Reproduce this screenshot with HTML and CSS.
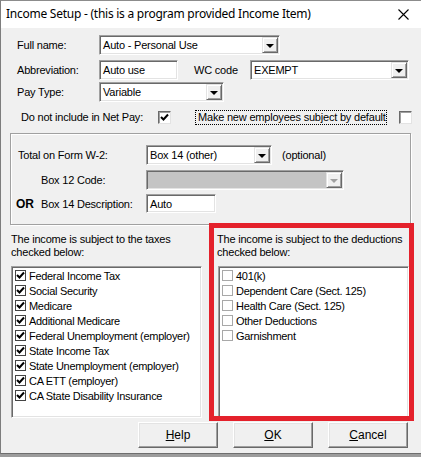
FILE: index.html
```html
<!DOCTYPE html>
<html>
<head>
  <title>Income Setup</title>
  <meta content="width=device-width, initial-scale=1" name="viewport" />
  <link rel="stylesheet" href="styles.css">
</head>
<body>
  <div class="window">
    <div class="titlebar">
      <span class="title">Income Setup - (this is a program provided Income Item)</span>
      <svg class="close" width="11" height="11" viewBox="0 0 11 11"><path d="M0.5 0.5 L10.5 10.5 M10.5 0.5 L0.5 10.5" stroke="#000" stroke-width="1.1" fill="none"/></svg>
    </div>

    <div class="row rowName">
      <span class="lbl lblMain">Full name:</span>
      <div class="combo wName"><span class="val">Auto - Personal Use</span><span class="drop"><i></i></span></div>
    </div>
    <div class="row rowAbbr">
      <span class="lbl lblMain">Abbreviation:</span>
      <div class="edit wAbbr">Auto use</div>
      <span class="lbl lblWc">WC code</span>
      <div class="combo wWc"><span class="val">EXEMPT</span><span class="drop"><i></i></span></div>
    </div>
    <div class="row rowPay">
      <span class="lbl lblMain">Pay Type:</span>
      <div class="combo wPay"><span class="val">Variable</span><span class="drop"><i></i></span></div>
    </div>
    <div class="row rowNet">
      <span class="lbl lblNet">Do not include in Net Pay:</span>
      <span class="check checked"><svg width="9" height="9" viewBox="0 0 9 9"><path d="M1 4 L3.5 6.5 L8 1.5" stroke="#000" stroke-width="2" fill="none"/></svg></span>
      <span class="focusText">Make new employees subject by default</span>
      <span class="check"></span>
    </div>

    <div class="group">
      <div class="row gRow1">
        <span class="lbl lblW2">Total on Form W-2:</span>
        <div class="combo wW2"><span class="val">Box 14 (other)</span><span class="drop"><i></i></span></div>
        <span class="lbl optional">(optional)</span>
      </div>
      <div class="row gRow2">
        <span class="lbl lblIndent">Box 12 Code:</span>
        <div class="combo disabled wBox12"><span class="val"></span><span class="drop"><i></i></span></div>
      </div>
      <div class="row gRow3">
        <span class="lbl lblOr">OR</span>
        <span class="lbl lblDesc">Box 14 Description:</span>
        <div class="edit wDesc">Auto</div>
      </div>
    </div>

    <div class="lists">
      <div class="listCol">
        <p class="caption">The income is subject to the taxes<br>checked below:</p>
        <ul class="listbox">
          <li><span class="box on"><svg width="9" height="9" viewBox="0 0 9 9"><path d="M1 4 L3.5 6.5 L8 1.5" stroke="#000" stroke-width="2" fill="none"/></svg></span>Federal Income Tax</li>
          <li><span class="box on"><svg width="9" height="9" viewBox="0 0 9 9"><path d="M1 4 L3.5 6.5 L8 1.5" stroke="#000" stroke-width="2" fill="none"/></svg></span>Social Security</li>
          <li><span class="box on"><svg width="9" height="9" viewBox="0 0 9 9"><path d="M1 4 L3.5 6.5 L8 1.5" stroke="#000" stroke-width="2" fill="none"/></svg></span>Medicare</li>
          <li><span class="box on"><svg width="9" height="9" viewBox="0 0 9 9"><path d="M1 4 L3.5 6.5 L8 1.5" stroke="#000" stroke-width="2" fill="none"/></svg></span>Additional Medicare</li>
          <li><span class="box on"><svg width="9" height="9" viewBox="0 0 9 9"><path d="M1 4 L3.5 6.5 L8 1.5" stroke="#000" stroke-width="2" fill="none"/></svg></span>Federal Unemployment (employer)</li>
          <li><span class="box on"><svg width="9" height="9" viewBox="0 0 9 9"><path d="M1 4 L3.5 6.5 L8 1.5" stroke="#000" stroke-width="2" fill="none"/></svg></span>State Income Tax</li>
          <li><span class="box on"><svg width="9" height="9" viewBox="0 0 9 9"><path d="M1 4 L3.5 6.5 L8 1.5" stroke="#000" stroke-width="2" fill="none"/></svg></span>State Unemployment (employer)</li>
          <li><span class="box on"><svg width="9" height="9" viewBox="0 0 9 9"><path d="M1 4 L3.5 6.5 L8 1.5" stroke="#000" stroke-width="2" fill="none"/></svg></span>CA ETT (employer)</li>
          <li><span class="box on"><svg width="9" height="9" viewBox="0 0 9 9"><path d="M1 4 L3.5 6.5 L8 1.5" stroke="#000" stroke-width="2" fill="none"/></svg></span>CA State Disability Insurance</li>
        </ul>
      </div>
      <div class="listCol listRight">
        <p class="caption">The income is subject to the deductions<br>checked below:</p>
        <ul class="listbox">
          <li><span class="box"></span>401(k)</li>
          <li><span class="box"></span>Dependent Care (Sect. 125)</li>
          <li><span class="box"></span>Health Care (Sect. 125)</li>
          <li><span class="box"></span>Other Deductions</li>
          <li><span class="box"></span>Garnishment</li>
        </ul>
      </div>
    </div>

    <div class="buttons">
      <button type="button" class="btn"><u>H</u>elp</button>
      <button type="button" class="btn"><u>O</u>K</button>
      <button type="button" class="btn"><u>C</u>ancel</button>
    </div>

    <div class="highlight"></div>
  </div>
</body>
</html>
```

FILE: styles.css
```css
body {
  margin: 0;
  background: #9c9c9c;
  font-family: "Liberation Sans", Arial, sans-serif;
  font-size: 11px;
  letter-spacing: -0.2px;
  color: #000;
}
.window {
  position: relative;
  width: 420px;
  height: 452px;
  background: #f0f0f0;
  border-left: 1px solid #7d7d7d;
  border-top: 1px solid #8c8c8c;
  border-bottom: 1px solid #6e6e6e;
}
.titlebar {
  height: 27px;
  background: #fff;
  display: flex;
  align-items: center;
  justify-content: space-between;
  padding: 0 12px 0 5px;
}
.title {
  font-family: "Noto Sans", sans-serif;
  font-size: 12px;
  letter-spacing: -0.25px;
  padding-bottom: 3px;
}
.close {
  margin-top: -1px;
}
.row {
  display: flex;
  align-items: center;
  height: 20px;
}
.lbl {
  white-space: nowrap;
}
.rowName {
  margin: 7px 0 0 16px;
}
.rowAbbr {
  margin: 5px 0 0 16px;
}
.rowPay {
  margin: 2px 0 0 16px;
}
.rowNet {
  margin: 7px 0 0 20px;
  height: 16px;
}
.lblMain {
  width: 82px;
}
.lblWc {
  margin-left: 16px;
  width: 56px;
}
.lblNet {
  width: 137px;
}

/* sunken fields */
.combo, .edit {
  height: 20px;
  box-sizing: border-box;
  background: #fff;
  border: 1px solid;
  border-color: #a0a0a0 #fff #fff #a0a0a0;
  box-shadow: inset 1px 1px 0 #696969, inset -1px -1px 0 #e3e3e3;
  display: flex;
  align-items: center;
  padding-left: 3px;
  white-space: nowrap;
}
.combo .val {
  flex: 1;
}
.drop {
  width: 16px;
  height: 16px;
  margin-right: 1px;
  box-sizing: border-box;
  background: #f0f0f0;
  border: 1px solid;
  border-color: #e3e3e3 #696969 #696969 #e3e3e3;
  box-shadow: inset 1px 1px 0 #fff, inset -1px -1px 0 #a0a0a0;
  display: flex;
  align-items: center;
  justify-content: center;
}
.drop i {
  width: 0;
  height: 0;
  border-left: 4px solid transparent;
  border-right: 4px solid transparent;
  border-top: 4px solid #000;
  margin-top: 1px;
}
.disabled {
  background: #c4c4c4;
}
.disabled .drop i {
  border-top-color: #a0a0a0;
}
.wName { width: 181px; }
.wAbbr { width: 79px; }
.wWc { width: 159px; }
.wPay { width: 125px; }
.wW2 { width: 126px; }
.wBox12 { width: 198px; }
.wDesc { width: 70px; height: 19px; }

.check {
  width: 13px;
  height: 13px;
  box-sizing: border-box;
  background: #fff;
  border: 1px solid;
  border-color: #6a6a6a #e3e3e3 #e3e3e3 #6a6a6a;
  box-shadow: inset 1px 1px 0 #a0a0a0;
  display: flex;
  align-items: center;
  justify-content: center;
}
.focusText {
  margin-left: 24px;
  width: 192px;
  height: 15px;
  box-sizing: border-box;
  border: 1px dotted #000;
  padding-left: 2px;
  line-height: 13px;
  white-space: nowrap;
}
.rowNet .focusText + .check {
  margin-left: 12px;
}

/* group box */
.group {
  margin: 8px 0 0 9px;
  width: 401px;
  height: 92px;
  box-sizing: border-box;
  border: 1px solid #a0a0a0;
  box-shadow: inset 1px 1px 0 #fff, 1px 1px 0 #fff;
}
.gRow1 {
  margin: 11px 0 0 7px;
}
.gRow2 {
  margin: 5px 0 0 30px;
}
.gRow3 {
  margin: 4px 0 0 5px;
  height: 19px;
}
.lblW2 {
  width: 128px;
}
.optional {
  margin-left: 10px;
}
.lblIndent {
  width: 105px;
}
.lblOr {
  font-weight: bold;
  font-size: 12px;
  width: 25px;
}
.lblDesc {
  width: 105px;
}

/* lists */
.lists {
  display: flex;
  margin: 8px 0 0 10px;
}
.listCol {
  width: 191px;
}
.listRight {
  margin-left: 16px;
}
.caption {
  margin: 0;
  line-height: 13px;
  height: 26px;
  white-space: nowrap;
}
.listRight .caption {
  margin-left: -1px;
}
.listbox {
  list-style: none;
  margin: 7px 0 0;
  padding: 1px 0 0 2px;
  height: 152px;
  box-sizing: border-box;
  background: #fff;
  border: 1px solid;
  border-color: #a0a0a0 #fff #fff #a0a0a0;
  box-shadow: inset 1px 1px 0 #696969, inset -1px -1px 0 #e3e3e3;
}
.listbox li {
  height: 15px;
  display: flex;
  align-items: center;
  white-space: nowrap;
  font-size: 11px;
  letter-spacing: -0.3px;
}
.box {
  width: 11px;
  height: 11px;
  box-sizing: border-box;
  border: 1px solid #a8a8a8;
  background: #fff;
  margin: 0 3px 0 1px;
  display: flex;
  align-items: center;
  justify-content: center;
}
.box.on {
  border-color: #444;
}

/* buttons */
.buttons {
  display: flex;
  gap: 15px;
  margin: 4px 0 0 137px;
}
.btn {
  width: 80px;
  height: 26px;
  box-sizing: border-box;
  background: #f0f0f0;
  border: 1px solid;
  border-color: #fff #696969 #696969 #fff;
  box-shadow: inset -1px -1px 0 #a0a0a0, inset 1px 1px 0 #e3e3e3;
  font-family: "Liberation Sans", Arial, sans-serif;
  font-size: 12px;
  padding: 0;
}

/* red annotation frame drawn over the dialog */
.highlight {
  position: absolute;
  left: 208px;
  top: 222px;
  width: 205px;
  height: 198px;
  box-sizing: border-box;
  border: 5px solid #e4212b;
}
```
